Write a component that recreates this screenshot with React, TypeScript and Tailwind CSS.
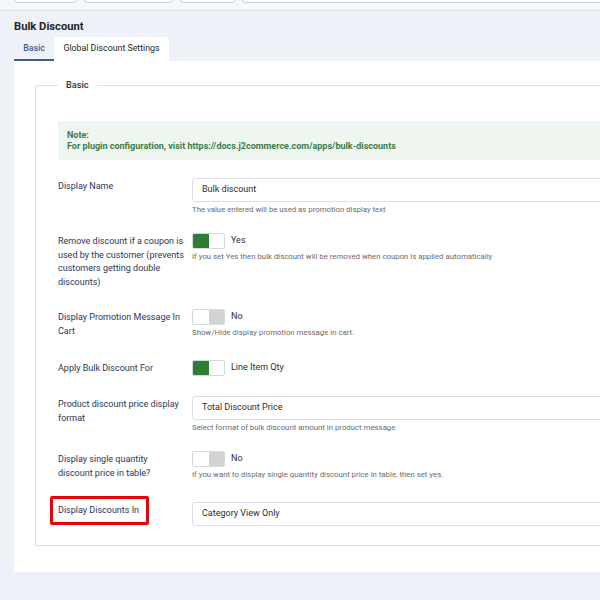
import React from "react";

function Toggle({ on }: { on: boolean }) {
  return (
    <div className="flex h-[16px] w-[33px] overflow-hidden rounded-[2px] border border-[#d6d8dc] bg-white">
      {on ? (
        <>
          <div className="h-full w-[16px] bg-[#2e7d32]" />
          <div className="h-full flex-1 bg-white" />
        </>
      ) : (
        <>
          <div className="h-full w-[16px] bg-white" />
          <div className="h-full flex-1 bg-[#d2d3d5]" />
        </>
      )}
    </div>
  );
}

function Help({ children }: { children: React.ReactNode }) {
  return <div className="mt-[3px] text-[7.8px] leading-[10px] text-[#6b6b6b]">{children}</div>;
}

function TextBox({ value }: { value: string }) {
  return (
    <div className="flex h-[24px] w-full items-center rounded-[3px] border border-[#dde0e6] bg-white pl-[9px] text-[9px] text-[#2d2d2d]">
      {value}
    </div>
  );
}

function Row({
  label,
  h,
  children,
  highlight,
}: {
  label: React.ReactNode;
  h: string;
  children: React.ReactNode;
  highlight?: boolean;
}) {
  return (
    <div className={`flex ${h}`}>
      <div className="relative w-[134px] shrink-0 pr-[7px] pt-[2px] text-[9px] leading-[13.6px] text-[#2b3656]">
        {label}
        {highlight && (
          <div className="pointer-events-none absolute left-[-8px] top-[-6px] h-[29px] w-[99px] rounded-[2px] border-[3px] border-[#e8000b]" />
        )}
      </div>
      <div className="flex-1">{children}</div>
    </div>
  );
}

function ToggleCtl({ on, text, help }: { on: boolean; text: string; help?: string }) {
  return (
    <div>
      <div className="flex items-center gap-[6px]">
        <Toggle on={on} />
        <span className="text-[9px] text-[#2d2d2d]">{text}</span>
      </div>
      {help && <Help>{help}</Help>}
    </div>
  );
}

export default function App() {
  return (
    <div className="h-[600px] w-[600px] overflow-hidden bg-[#eef1f8]" style={{ fontFamily: "Roboto, 'Liberation Sans', sans-serif" }}>
      <div className="w-[680px]">
        {/* top toolbar strip */}
        <div className="h-[11px] overflow-hidden border-b border-[#dfe3ea] bg-[#f5f7fb]">
          <div className="-mt-[20px] flex gap-[7px] pl-[14px]">
            <div className="h-[23px] w-[63px] rounded-[3px] border border-[#c9cdd4] bg-white" />
            <div className="h-[23px] w-[89px] rounded-[3px] border border-[#c9cdd4] bg-white" />
            <div className="h-[23px] w-[55px] rounded-[3px] border border-[#c9cdd4] bg-white" />
            <div className="h-[23px] w-[400px] rounded-[3px] border border-[#c9cdd4] bg-white" />
          </div>
        </div>

        <div className="pl-[14px]">
          <div className="pt-[9px] text-[11.2px] font-bold leading-[14px] text-[#22262a]">Bulk Discount</div>

          {/* tabs */}
          <div className="mt-[3px] flex h-[24px] text-[8.8px]">
            <div className="flex w-[40px] items-center justify-center border-b-[2px] border-[#3f5f90] pt-[2px] font-medium text-[#3a5a8a]">
              Basic
            </div>
            <div className="flex w-[115px] items-center justify-center rounded-t-[3px] bg-white text-[#22262a]">
              Global Discount Settings
            </div>
          </div>

          {/* panel */}
          <div className="bg-white pb-[26px] pl-[21px] pt-[17px]">
            <fieldset className="rounded-[2px] border border-[#dcdfe4] pb-[19px] pl-[22px] pt-[29px]">
              <legend className="px-[8px] text-[9.2px] font-medium leading-[14px] text-[#333]">Basic</legend>

              <div className="flex h-[39px] flex-col justify-center bg-[#eef6ef] pl-[9px] text-[9px] font-bold leading-[11px] text-[#3c7b4d]">
                <div>Note:</div>
                <div>For plugin configuration, visit https://docs.j2commerce.com/apps/bulk-discounts</div>
              </div>

              <div className="mt-[18px]">
                <Row label="Display Name" h="h-[55px]">
                  <TextBox value="Bulk discount" />
                  <Help>The value entered will be used as promotion display text</Help>
                </Row>
                <Row
                  label="Remove discount if a coupon is used by the customer (prevents customers getting double discounts)"
                  h="h-[76px]"
                >
                  <ToggleCtl
                    on
                    text="Yes"
                    help="If you set Yes then bulk discount will be removed when coupon is applied automatically"
                  />
                </Row>
                <Row label="Display Promotion Message In Cart" h="h-[51px]">
                  <ToggleCtl on={false} text="No" help="Show/Hide display promotion message in cart." />
                </Row>
                <Row label="Apply Bulk Discount For" h="h-[36px]">
                  <ToggleCtl on text="Line Item Qty" />
                </Row>
                <Row label="Product discount price display format" h="h-[55px]">
                  <TextBox value="Total Discount Price" />
                  <Help>Select format of bulk discount amount in product message</Help>
                </Row>
                <Row
                  label={
                    <>
                      Display single quantity
                      <br />
                      discount price in table?
                    </>
                  }
                  h="h-[51px]"
                >
                  <ToggleCtl
                    on={false}
                    text="No"
                    help="If you want to display single quantity discount price in table, then set yes."
                  />
                </Row>
                <Row label="Display Discounts In" h="h-[24px]" highlight>
                  <TextBox value="Category View Only" />
                </Row>
              </div>
            </fieldset>
          </div>
        </div>
      </div>
    </div>
  );
}
